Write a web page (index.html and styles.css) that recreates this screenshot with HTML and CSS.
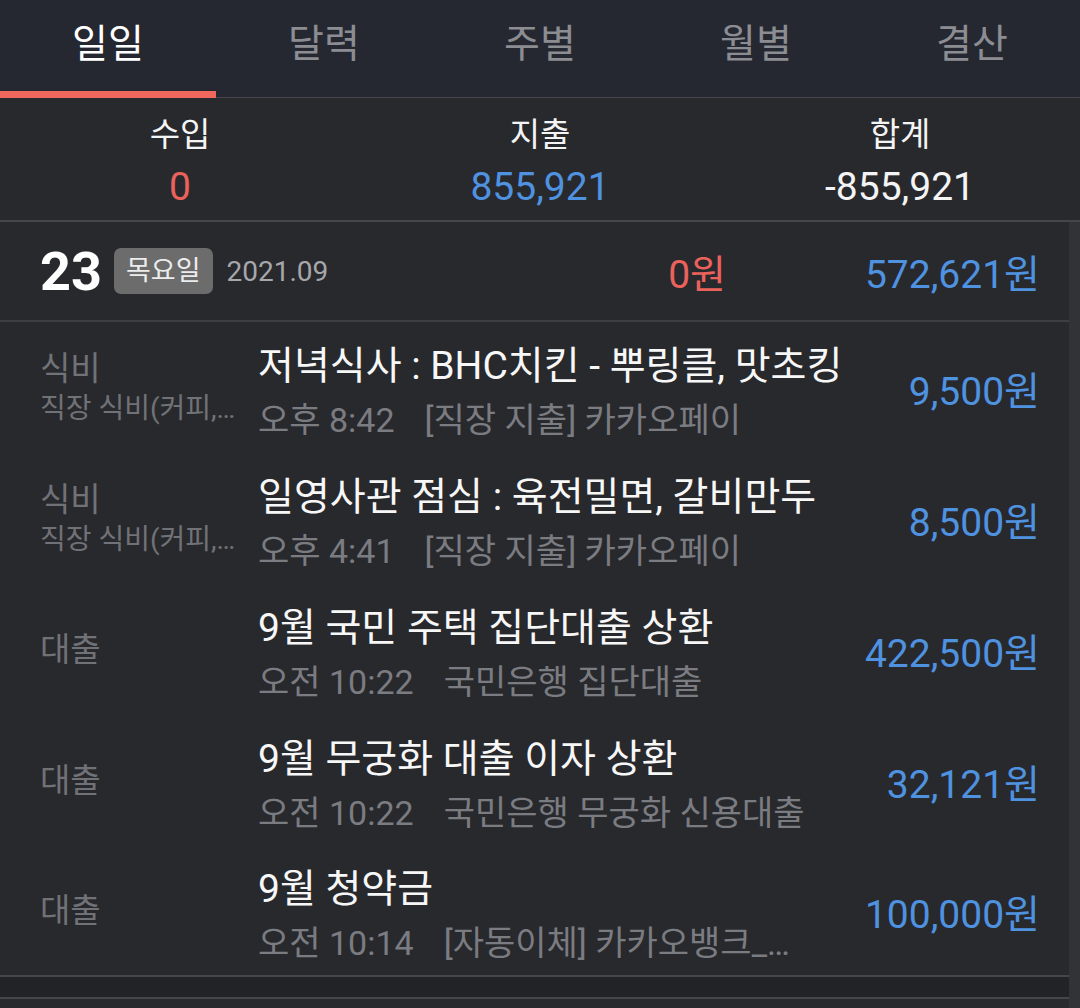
FILE: index.html
```html
<!DOCTYPE html>
<html>

<head>
    <meta name="viewport" content="width=device-width, initial-scale=1">
    <title>
        가계부 - 일일
    </title>
    <link rel="stylesheet" href="styles.css">
</head>

<body>
    <div class="tabs">
        <div class="tab active">일일</div>
        <div class="tab">달력</div>
        <div class="tab">주별</div>
        <div class="tab">월별</div>
        <div class="tab">결산</div>
    </div>

    <div class="summary">
        <div class="sum-col">
            <div class="sum-label">수입</div>
            <div class="sum-value income">0</div>
        </div>
        <div class="sum-col">
            <div class="sum-label">지출</div>
            <div class="sum-value expense">855,921</div>
        </div>
        <div class="sum-col">
            <div class="sum-label">합계</div>
            <div class="sum-value">-855,921</div>
        </div>
    </div>

    <div class="list">
        <div class="scrollbar"></div>

        <div class="day-head">
            <div class="day-left">
                <span class="day-num">23</span>
                <span class="day-badge">목요일</span>
                <span class="day-month">2021.09</span>
            </div>
            <div class="day-income">0원</div>
            <div class="day-expense">572,621원</div>
        </div>

        <div class="entry">
            <div class="cat">
                <div class="cat-main">식비</div>
                <div class="cat-sub">직장 식비(커피,간식)</div>
            </div>
            <div class="info">
                <div class="title">저녁식사 : BHC치킨 - 뿌링클, 맛초킹</div>
                <div class="meta"><span class="time">오후 8:42</span><span class="memo">[직장 지출] 카카오페이</span></div>
            </div>
            <div class="amount">9,500원</div>
        </div>

        <div class="entry">
            <div class="cat">
                <div class="cat-main">식비</div>
                <div class="cat-sub">직장 식비(커피,간식)</div>
            </div>
            <div class="info">
                <div class="title">일영사관 점심 : 육전밀면, 갈비만두</div>
                <div class="meta"><span class="time">오후 4:41</span><span class="memo">[직장 지출] 카카오페이</span></div>
            </div>
            <div class="amount">8,500원</div>
        </div>

        <div class="entry">
            <div class="cat">
                <div class="cat-main">대출</div>
            </div>
            <div class="info">
                <div class="title">9월 국민 주택 집단대출 상환</div>
                <div class="meta"><span class="time">오전 10:22</span><span class="memo">국민은행 집단대출</span></div>
            </div>
            <div class="amount">422,500원</div>
        </div>

        <div class="entry">
            <div class="cat">
                <div class="cat-main">대출</div>
            </div>
            <div class="info">
                <div class="title">9월 무궁화 대출 이자 상환</div>
                <div class="meta"><span class="time">오전 10:22</span><span class="memo">국민은행 무궁화 신용대출</span></div>
            </div>
            <div class="amount">32,121원</div>
        </div>

        <div class="entry last">
            <div class="cat">
                <div class="cat-main">대출</div>
            </div>
            <div class="info">
                <div class="title">9월 청약금</div>
                <div class="meta"><span class="time">오전 10:14</span><span class="memo">[자동이체] 카카오뱅크_청약</span></div>
            </div>
            <div class="amount">100,000원</div>
        </div>

        <div class="gap-band"></div>
    </div>
</body>

</html>
```

FILE: styles.css
```css
body {
    margin: 0;
    background-color: #28292d;
    color: #f2f2f2;
    font-family: Roboto, "Noto Sans CJK KR", sans-serif;
    width: 1080px;
    height: 1008px;
    overflow: hidden;
}

.tabs {
    display: flex;
    height: 97px;
    background-color: #252830;
    border-bottom: 1px solid #45474d;
}

.tab {
    flex: 1;
    display: flex;
    justify-content: center;
    padding-top: 19px;
    font-size: 39px;
    line-height: 50px;
    color: #8b8d93;
    box-sizing: border-box;
}

.tab.active {
    color: #ffffff;
    border-bottom: 7px solid #f0675e;
    margin-bottom: -1px;
}

.summary {
    display: flex;
    height: 122px;
    border-bottom: 2px solid #45464a;
}

.sum-col {
    flex: 1;
    display: flex;
    flex-direction: column;
    align-items: center;
    padding-top: 15px;
}

.sum-label {
    font-size: 33px;
    line-height: 44px;
    color: #f4f4f4;
}

.sum-value {
    font-size: 39px;
    line-height: 60px;
    color: #f4f4f4;
}

.income {
    color: #ea625b;
}

.expense {
    color: #4f92e0;
}

.list {
    position: relative;
}

.scrollbar {
    position: absolute;
    top: 0;
    right: 0;
    width: 11px;
    height: 800px;
    background-color: #323337;
}

.day-head {
    display: flex;
    align-items: center;
    height: 98px;
    padding: 0 40px 0 40px;
    border-bottom: 2px solid #3e3f43;
}

.day-left {
    display: flex;
    align-items: center;
    flex: 1;
}

.day-num {
    font-size: 54px;
    font-weight: bold;
    color: #ffffff;
    margin-right: 12px;
}

.day-badge {
    background-color: #6c6c6d;
    color: #ececec;
    font-size: 27px;
    line-height: 46px;
    padding: 0 12px;
    border-radius: 7px;
    margin-right: 14px;
}

.day-month {
    font-size: 28px;
    color: #a6a7aa;
}

.day-income,
.day-expense {
    font-size: 39px;
    text-align: right;
}

.day-income {
    color: #ea625b;
}

.day-expense {
    width: 314px;
    color: #4f92e0;
}

.entry {
    display: flex;
    align-items: center;
    height: 131px;
    padding: 0 40px 0 40px;
}

.entry.last {
    border-bottom: 2px solid #45464a;
    height: 129px;
}

.cat {
    width: 218px;
    flex-shrink: 0;
    color: #717277;
}

.cat-main {
    font-size: 33px;
    line-height: 42px;
}

.cat-sub {
    font-size: 28px;
    line-height: 38px;
    max-width: 200px;
    white-space: nowrap;
    overflow: hidden;
    text-overflow: ellipsis;
}

.info {
    flex: 1;
    min-width: 0;
    padding-top: 8px;
}

.title {
    font-size: 39px;
    line-height: 48px;
    color: #f7f7f7;
    white-space: nowrap;
}

.meta {
    display: flex;
    font-size: 34px;
    line-height: 44px;
    margin-top: 8px;
    color: #7b7c81;
    white-space: nowrap;
}

.time {
    margin-right: 30px;
}

.memo {
    max-width: 366px;
    overflow: hidden;
    text-overflow: ellipsis;
}

.amount {
    font-size: 39px;
    color: #4f92e0;
    white-space: nowrap;
}

.gap-band {
    height: 20px;
    background-color: #222327;
    border-bottom: 2px solid #45464a;
}
```
